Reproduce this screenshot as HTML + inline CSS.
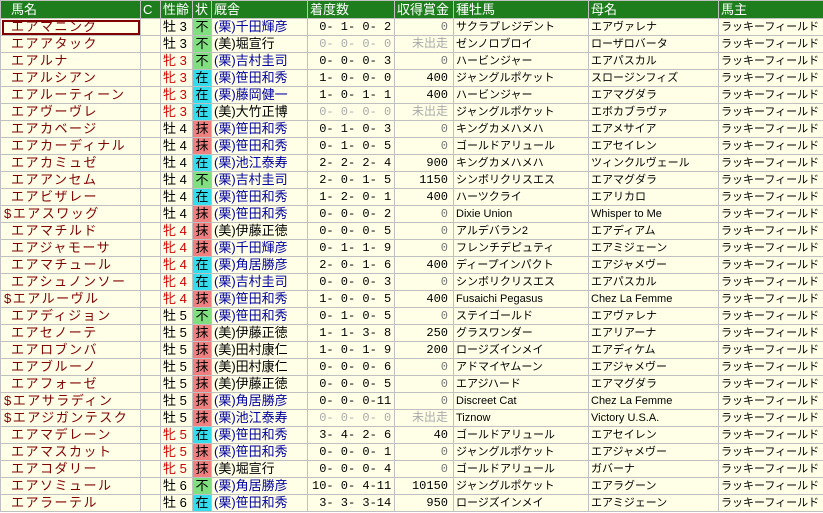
<!DOCTYPE html>
<html><head><meta charset="utf-8">
<style>
body{margin:0;background:#fff;}
table{border-collapse:collapse;table-layout:fixed;width:823px;font-family:"Liberation Sans","Noto Sans CJK JP",sans-serif;font-size:11px;}
td{border:1px solid #c0c0c0;height:16px;padding:0 0 0 2px;white-space:pre;overflow:hidden;line-height:16px;background:#ffffe8;color:#000;}
tr.h td{background:#1e7e1e;color:#fff;height:17px;border-color:#c0c0c0;font-size:13px;}
td.n{color:#800000;letter-spacing:1.5px;padding-left:10px;font-size:13px;}
td.s{font-size:13px;}
td.f{color:#d00000;}
td.st{text-align:center;padding:0;font-size:13px;}
.g{background:#80e080!important}.c{background:#33ddee!important}.p{background:#f08080!important}
td.k{color:#0000a0;font-size:13px;}
td.kb{color:#000;font-size:13px;}
td.r{font-family:"Liberation Mono","Noto Sans CJK JP",monospace;font-size:12px;padding-left:4px;}
td.m{text-align:right;padding-right:5px;font-family:"Liberation Mono","Noto Sans CJK JP",monospace;font-size:12px;}
.gr{color:#aaa!important}
.z{color:#777!important}
</style></head><body>
<table>
<col style="width:140px"><col style="width:20px"><col style="width:32px"><col style="width:19px"><col style="width:96px"><col style="width:87px"><col style="width:59px"><col style="width:135px"><col style="width:130px"><col style="width:105px">
<tr class="h"><td style="padding-left:10px">馬名</td><td>C</td><td>性齢</td><td>状</td><td>厩舎</td><td>着度数</td><td>収得賞金</td><td>種牡馬</td><td>母名</td><td>馬主</td></tr>
<tr><td class="n" style="outline:2px solid #800000;outline-offset:-3px">エアマニング</td><td></td><td class="s">牡 3</td><td class="st g">不</td><td class="k">(栗)千田輝彦</td><td class="r"> 0- 1- 0- 2</td><td class="m z">0</td><td>サクラプレジデント</td><td>エアヴァレナ</td><td>ラッキーフィールド</td></tr>
<tr><td class="n">エアアタック</td><td></td><td class="s">牡 3</td><td class="st g">不</td><td class="kb">(美)堀宣行</td><td class="r gr"> 0- 0- 0- 0</td><td class="m gr">未出走</td><td>ゼンノロブロイ</td><td>ローザロバータ</td><td>ラッキーフィールド</td></tr>
<tr><td class="n">エアルナ</td><td></td><td class="s f">牝 3</td><td class="st g">不</td><td class="k">(栗)吉村圭司</td><td class="r"> 0- 0- 0- 3</td><td class="m z">0</td><td>ハービンジャー</td><td>エアパスカル</td><td>ラッキーフィールド</td></tr>
<tr><td class="n">エアルシアン</td><td></td><td class="s f">牝 3</td><td class="st c">在</td><td class="k">(栗)笹田和秀</td><td class="r"> 1- 0- 0- 0</td><td class="m">400</td><td>ジャングルポケット</td><td>スロージンフィズ</td><td>ラッキーフィールド</td></tr>
<tr><td class="n">エアルーティーン</td><td></td><td class="s f">牝 3</td><td class="st c">在</td><td class="k">(栗)藤岡健一</td><td class="r"> 1- 0- 1- 1</td><td class="m">400</td><td>ハービンジャー</td><td>エアマグダラ</td><td>ラッキーフィールド</td></tr>
<tr><td class="n">エアヴーヴレ</td><td></td><td class="s f">牝 3</td><td class="st c">在</td><td class="kb">(美)大竹正博</td><td class="r gr"> 0- 0- 0- 0</td><td class="m gr">未出走</td><td>ジャングルポケット</td><td>エボカブラヴァ</td><td>ラッキーフィールド</td></tr>
<tr><td class="n">エアカベージ</td><td></td><td class="s">牡 4</td><td class="st p">抹</td><td class="k">(栗)笹田和秀</td><td class="r"> 0- 1- 0- 3</td><td class="m z">0</td><td>キングカメハメハ</td><td>エアメサイア</td><td>ラッキーフィールド</td></tr>
<tr><td class="n">エアカーディナル</td><td></td><td class="s">牡 4</td><td class="st p">抹</td><td class="k">(栗)笹田和秀</td><td class="r"> 0- 1- 0- 5</td><td class="m z">0</td><td>ゴールドアリュール</td><td>エアセイレン</td><td>ラッキーフィールド</td></tr>
<tr><td class="n">エアカミュゼ</td><td></td><td class="s">牡 4</td><td class="st c">在</td><td class="k">(栗)池江泰寿</td><td class="r"> 2- 2- 2- 4</td><td class="m">900</td><td>キングカメハメハ</td><td>ツィンクルヴェール</td><td>ラッキーフィールド</td></tr>
<tr><td class="n">エアアンセム</td><td></td><td class="s">牡 4</td><td class="st g">不</td><td class="k">(栗)吉村圭司</td><td class="r"> 2- 0- 1- 5</td><td class="m">1150</td><td>シンボリクリスエス</td><td>エアマグダラ</td><td>ラッキーフィールド</td></tr>
<tr><td class="n">エアビザレー</td><td></td><td class="s">牡 4</td><td class="st c">在</td><td class="k">(栗)笹田和秀</td><td class="r"> 1- 2- 0- 1</td><td class="m">400</td><td>ハーツクライ</td><td>エアリカロ</td><td>ラッキーフィールド</td></tr>
<tr><td class="n" style="padding-left:3px">$エアスワッグ</td><td></td><td class="s">牡 4</td><td class="st p">抹</td><td class="k">(栗)笹田和秀</td><td class="r"> 0- 0- 0- 2</td><td class="m z">0</td><td>Dixie Union</td><td>Whisper to Me</td><td>ラッキーフィールド</td></tr>
<tr><td class="n">エアマチルド</td><td></td><td class="s f">牝 4</td><td class="st p">抹</td><td class="kb">(美)伊藤正徳</td><td class="r"> 0- 0- 0- 5</td><td class="m z">0</td><td>アルデバラン2</td><td>エアディアム</td><td>ラッキーフィールド</td></tr>
<tr><td class="n">エアジャモーサ</td><td></td><td class="s f">牝 4</td><td class="st p">抹</td><td class="k">(栗)千田輝彦</td><td class="r"> 0- 1- 1- 9</td><td class="m z">0</td><td>フレンチデピュティ</td><td>エアミジェーン</td><td>ラッキーフィールド</td></tr>
<tr><td class="n">エアマチュール</td><td></td><td class="s f">牝 4</td><td class="st c">在</td><td class="k">(栗)角居勝彦</td><td class="r"> 2- 0- 1- 6</td><td class="m">400</td><td>ディープインパクト</td><td>エアジャメヴー</td><td>ラッキーフィールド</td></tr>
<tr><td class="n">エアシュノンソー</td><td></td><td class="s f">牝 4</td><td class="st c">在</td><td class="k">(栗)吉村圭司</td><td class="r"> 0- 0- 0- 3</td><td class="m z">0</td><td>シンボリクリスエス</td><td>エアパスカル</td><td>ラッキーフィールド</td></tr>
<tr><td class="n" style="padding-left:3px">$エアルーヴル</td><td></td><td class="s f">牝 4</td><td class="st p">抹</td><td class="k">(栗)笹田和秀</td><td class="r"> 1- 0- 0- 5</td><td class="m">400</td><td>Fusaichi Pegasus</td><td>Chez La Femme</td><td>ラッキーフィールド</td></tr>
<tr><td class="n">エアディジョン</td><td></td><td class="s">牡 5</td><td class="st g">不</td><td class="k">(栗)笹田和秀</td><td class="r"> 0- 1- 0- 5</td><td class="m z">0</td><td>ステイゴールド</td><td>エアヴァレナ</td><td>ラッキーフィールド</td></tr>
<tr><td class="n">エアセノーテ</td><td></td><td class="s">牡 5</td><td class="st p">抹</td><td class="kb">(美)伊藤正徳</td><td class="r"> 1- 1- 3- 8</td><td class="m">250</td><td>グラスワンダー</td><td>エアリアーナ</td><td>ラッキーフィールド</td></tr>
<tr><td class="n">エアロブンバ</td><td></td><td class="s">牡 5</td><td class="st p">抹</td><td class="kb">(美)田村康仁</td><td class="r"> 1- 0- 1- 9</td><td class="m">200</td><td>ロージズインメイ</td><td>エアディケム</td><td>ラッキーフィールド</td></tr>
<tr><td class="n">エアブルーノ</td><td></td><td class="s">牡 5</td><td class="st p">抹</td><td class="kb">(美)田村康仁</td><td class="r"> 0- 0- 0- 6</td><td class="m z">0</td><td>アドマイヤムーン</td><td>エアジャメヴー</td><td>ラッキーフィールド</td></tr>
<tr><td class="n">エアフォーゼ</td><td></td><td class="s">牡 5</td><td class="st p">抹</td><td class="kb">(美)伊藤正徳</td><td class="r"> 0- 0- 0- 5</td><td class="m z">0</td><td>エアジハード</td><td>エアマグダラ</td><td>ラッキーフィールド</td></tr>
<tr><td class="n" style="padding-left:3px">$エアサラディン</td><td></td><td class="s">牡 5</td><td class="st p">抹</td><td class="k">(栗)角居勝彦</td><td class="r"> 0- 0- 0-11</td><td class="m z">0</td><td>Discreet Cat</td><td>Chez La Femme</td><td>ラッキーフィールド</td></tr>
<tr><td class="n" style="padding-left:3px">$エアジガンテスク</td><td></td><td class="s">牡 5</td><td class="st p">抹</td><td class="k">(栗)池江泰寿</td><td class="r gr"> 0- 0- 0- 0</td><td class="m gr">未出走</td><td>Tiznow</td><td>Victory U.S.A.</td><td>ラッキーフィールド</td></tr>
<tr><td class="n">エアマデレーン</td><td></td><td class="s f">牝 5</td><td class="st c">在</td><td class="k">(栗)笹田和秀</td><td class="r"> 3- 4- 2- 6</td><td class="m">40</td><td>ゴールドアリュール</td><td>エアセイレン</td><td>ラッキーフィールド</td></tr>
<tr><td class="n">エアマスカット</td><td></td><td class="s f">牝 5</td><td class="st p">抹</td><td class="k">(栗)笹田和秀</td><td class="r"> 0- 0- 0- 1</td><td class="m z">0</td><td>ジャングルポケット</td><td>エアジャメヴー</td><td>ラッキーフィールド</td></tr>
<tr><td class="n">エアコダリー</td><td></td><td class="s f">牝 5</td><td class="st p">抹</td><td class="kb">(美)堀宣行</td><td class="r"> 0- 0- 0- 4</td><td class="m z">0</td><td>ゴールドアリュール</td><td>ガバーナ</td><td>ラッキーフィールド</td></tr>
<tr><td class="n">エアソミュール</td><td></td><td class="s">牡 6</td><td class="st g">不</td><td class="k">(栗)角居勝彦</td><td class="r">10- 0- 4-11</td><td class="m">10150</td><td>ジャングルポケット</td><td>エアラグーン</td><td>ラッキーフィールド</td></tr>
<tr><td class="n">エアラーテル</td><td></td><td class="s">牡 6</td><td class="st c">在</td><td class="k">(栗)笹田和秀</td><td class="r"> 3- 3- 3-14</td><td class="m">950</td><td>ロージズインメイ</td><td>エアミジェーン</td><td>ラッキーフィールド</td></tr>
</table>
</body></html>
